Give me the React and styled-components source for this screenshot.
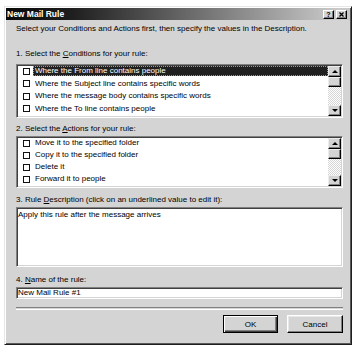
import React from 'react';
import styled, { createGlobalStyle, css } from 'styled-components';

const Global = createGlobalStyle`
  html, body { margin: 0; padding: 0; background: #fff; }
  body { font-family: "Liberation Sans", Arial, sans-serif; font-size: 8px; color: #000; }
`;

const Window = styled.div`
  box-sizing: border-box;
  width: 348px;
  margin: 6px 0 0 4px;
  padding: 1px;
  background: #d4d4d4;
  border: 1px solid;
  border-color: #e6e6e6 #1e1e1e #1e1e1e #e6e6e6;
  box-shadow: inset 1px 1px #fff, inset -1px -1px #5a5a5a;
  display: flex;
  flex-direction: column;
`;

const TitleBar = styled.div`
  height: 12px;
  display: flex;
  align-items: center;
  padding: 0 3px 0 1px;
  background: linear-gradient(to right, #0a0a0a 0%, #1c1c1c 18%, #c8c8c8 96%);
`;

const Title = styled.span`
  flex: 1;
  font-weight: bold;
  font-size: 8.5px;
  line-height: 12px;
  color: #fff;
  white-space: nowrap;
`;

const TitleButton = styled.div`
  box-sizing: border-box;
  width: 11px;
  height: 9px;
  background: #d4d4d4;
  border: 1px solid;
  border-color: #fff #000 #000 #fff;
  box-shadow: inset -1px -1px #808080;
  display: flex;
  align-items: center;
  justify-content: center;
  font-weight: bold;
  font-size: 7px;
  line-height: 7px;
  & + & { margin-left: 2px; }
`;

const Body = styled.div`
  display: flex;
  flex-direction: column;
  padding: 4px 7px 10px 10px;
`;

const Text = styled.div`
  height: 10px;
  line-height: 10px;
  white-space: nowrap;
  margin-top: ${p => p.$mt || 0}px;
`;

const Key = styled.span`
  text-decoration: underline;
`;

const Sunken = styled.div`
  box-sizing: border-box;
  height: ${p => p.$h}px;
  margin-top: ${p => p.$mt || 0}px;
  background: #fff;
  border: 1px solid;
  border-color: #808080 #fff #fff #808080;
  box-shadow: inset 1px 1px #404040, inset -1px -1px #d4d4d4;
  padding: 1px;
`;

const ListBox = styled(Sunken)`
  display: flex;
`;

const Items = styled.div`
  flex: 1;
  display: flex;
  flex-direction: column;
`;

const Row = styled.div`
  height: 12.5px;
  display: flex;
  align-items: flex-start;
`;

const Check = styled.span`
  box-sizing: border-box;
  width: 7px;
  height: 7px;
  margin: 1.5px 0 0 5px;
  border: 1px solid #111;
  background: #fff;
  flex: none;
`;

const ItemLabel = styled.span`
  flex: 1;
  margin-left: 3px;
  padding: 0 2px;
  height: 10px;
  line-height: 10px;
  white-space: nowrap;
  ${p => p.$selected && css`
    background: #202020;
    color: #fff;
    outline: 1px dotted #9a9a9a;
    outline-offset: -1px;
  `}
`;

const Scrollbar = styled.div`
  width: 13px;
  display: flex;
  flex-direction: column;
  background: repeating-conic-gradient(#fff 0% 25%, #d4d4d4 0% 50%) 0 0 / 2px 2px;
`;

const ScrollButton = styled.div`
  box-sizing: border-box;
  height: ${p => p.$h || 11}px;
  background: #d4d4d4;
  border: 1px solid;
  border-color: #ececec #000 #000 #ececec;
  box-shadow: inset -1px -1px #808080;
  display: flex;
  align-items: center;
  justify-content: center;
`;

const Track = styled.div`
  flex: 1;
`;

const Arrow = styled.span`
  width: 0;
  height: 0;
  border-left: 3px solid transparent;
  border-right: 3px solid transparent;
  ${p => p.$up
    ? css`border-bottom: 3px solid #000;`
    : css`border-top: 3px solid #000;`}
`;

const DescText = styled.div`
  padding: 1px 0 0 0;
  line-height: 10px;
  white-space: nowrap;
`;

const Input = styled(Sunken)`
  padding: 1px 0 0 1px;
  line-height: 8px;
  white-space: nowrap;
`;

const Separator = styled.div`
  margin-top: 8px;
  height: 1px;
  border-top: 1px solid #808080;
  border-bottom: 1px solid #fff;
`;

const ButtonRow = styled.div`
  display: flex;
  justify-content: flex-end;
  gap: 9px;
  margin-top: 5px;
`;

const Button = styled.button`
  box-sizing: border-box;
  width: ${p => p.$w}px;
  height: 18px;
  padding: 0;
  font: 8px "Liberation Sans", Arial, sans-serif;
  color: #000;
  background: #d4d4d4;
  border: 1px solid;
  border-color: #fff #000 #000 #fff;
  box-shadow: inset -1px -1px #808080, inset 1px 1px #e8e8e8;
  ${p => p.$default && css`
    border-color: #000;
    box-shadow: inset 1px 1px #fff, inset -1px -1px #404040, inset -2px -2px #808080;
  `}
`;

const conditions = [
  'Where the From line contains people',
  'Where the Subject line contains specific words',
  'Where the message body contains specific words',
  'Where the To line contains people',
];

const actions = [
  'Move it to the specified folder',
  'Copy it to the specified folder',
  'Delete it',
  'Forward it to people',
];

function List({ items, height, mt, selected }) {
  return (
    <ListBox $h={height} $mt={mt}>
      <Items>
        {items.map((t, i) => (
          <Row key={t}>
            <Check />
            <ItemLabel $selected={i === selected}>{t}</ItemLabel>
          </Row>
        ))}
      </Items>
      <Scrollbar>
        <ScrollButton><Arrow $up /></ScrollButton>
        <ScrollButton $h={10} />
        <Track />
        <ScrollButton><Arrow /></ScrollButton>
      </Scrollbar>
    </ListBox>
  );
}

export default function App() {
  return (
    <>
      <Global />
      <Window>
        <TitleBar>
          <Title>New Mail Rule</Title>
          <TitleButton>?</TitleButton>
          <TitleButton>
            <svg width="5" height="5" viewBox="0 0 5 5">
              <path d="M0.5 0.5 L4.5 4.5 M4.5 0.5 L0.5 4.5" stroke="#000" strokeWidth="1.3" />
            </svg>
          </TitleButton>
        </TitleBar>
        <Body>
          <Text>Select your Conditions and Actions first, then specify the values in the Description.</Text>
          <Text $mt={15}>1. Select the <Key>C</Key>onditions for your rule:</Text>
          <List items={conditions} height={54} mt={5} selected={0} />
          <Text $mt={6}>2. Select the <Key>A</Key>ctions for your rule:</Text>
          <List items={actions} height={52} mt={2} selected={-1} />
          <Text $mt={7}>3. Rule <Key>D</Key>escription (click on an underlined value to edit it):</Text>
          <Sunken $h={60} $mt={2}>
            <DescText>Apply this rule after the message arrives</DescText>
          </Sunken>
          <Text $mt={8}>4. <Key>N</Key>ame of the rule:</Text>
          <Input $h={12} $mt={2}>New Mail Rule #1</Input>
          <Separator />
          <ButtonRow>
            <Button $w={55} $default>OK</Button>
            <Button $w={56}>Cancel</Button>
          </ButtonRow>
        </Body>
      </Window>
    </>
  );
}
